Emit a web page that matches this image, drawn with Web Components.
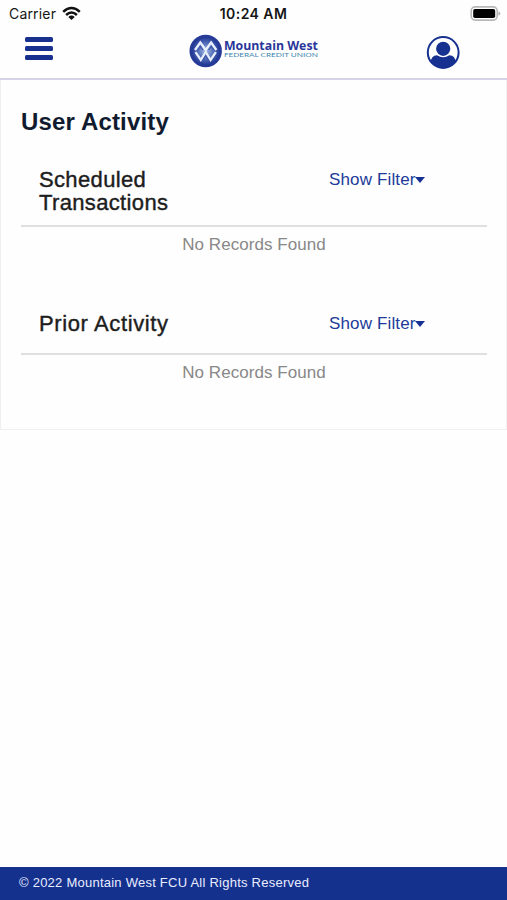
<!DOCTYPE html>
<html lang="en">
<head>
<meta charset="utf-8">
<title>User Activity</title>
<style>
body{margin:0;background:#fefefe;font-family:"Liberation Sans",Arial,sans-serif}
</style>
</head>
<body>
<activity-app></activity-app>
<script>
const define = (name, html) => customElements.define(name, class extends HTMLElement {
  constructor() {
    super();
    this.attachShadow({ mode: 'open' }).innerHTML = html;
  }
});

define('status-bar', `
<style>
:host{display:grid;grid-template-columns:1fr auto 1fr;align-items:center;height:27px;box-sizing:border-box;padding:0 6px 0 9px;font-family:Inter,sans-serif;color:#151515}
.left{display:flex;align-items:center;gap:5.5px;font-size:14px;letter-spacing:.18px}
.time{font-size:14px;font-weight:600;letter-spacing:.45px;margin-right:3px}
.battery{justify-self:end;display:block}
svg{display:block}
</style>
<div class="left"><span>Carrier</span>
<svg width="19" height="15" viewBox="0 0 19 15" fill="none" stroke="#111" stroke-width="2.5"><path d="M1.2 5.8Q9.5-1.8 17.8 5.8M4.1 9Q9.5 3.9 14.9 9"/><path d="M6.3 10.9Q9.5 8 12.7 10.9L9.5 14Z" fill="#111" stroke="none"/></svg></div>
<span class="time">10:24 AM</span>
<svg class="battery" width="31" height="15" viewBox="0 0 31 15"><rect x="1.2" y=".9" width="26" height="13.2" rx="4" fill="#fff" stroke="#b8b8b8" stroke-width="1.6"/><rect x="3.2" y="3" width="22" height="9" rx="1.8" fill="#000"/><path d="M28.5 5.2Q32 7.5 28.5 9.8Z" fill="#aaa"/></svg>
`);

define('brand-logo', `
<style>:host{display:block}svg{display:block}</style>
<svg width="130" height="34" viewBox="0 0 130 34">
<defs><radialGradient id="g"><stop offset="0" stop-color="#a9bde5"/><stop offset=".5" stop-color="#5a76bd"/><stop offset="1" stop-color="#223795"/></radialGradient></defs>
<circle cx="16.7" cy="17" r="16.2" fill="#263b98"/><circle cx="16.7" cy="17" r="14" fill="url(#g)"/>
<g fill="none" stroke="#e8f0fc" stroke-width="2.3"><path d="M6 16L11.3 8.5L16.7 16L22.1 8.5L27.4 16"/><path d="M6.5 18.2L11.8 26L16.7 18.2L21.6 26L26.9 18.2"/></g>
<path d="M8.8 16L11.3 12.3L13.8 16M19.6 16L22.1 12.3L24.6 16M14 26L16.7 21.5L19.4 26" fill="none" stroke="#3f58aa" stroke-width="1.2"/>
<text x="34.9" y="16.2" textLength="94" lengthAdjust="spacingAndGlyphs" font-family="Open Sans,sans-serif" font-weight="700" font-size="12.6" fill="#29369a">Mountain West</text>
<text x="34.9" y="22.6" textLength="94" lengthAdjust="spacingAndGlyphs" font-family="Lato,sans-serif" font-size="5.4" fill="#3f87b0">FEDERAL CREDIT UNION</text>
</svg>
`);

define('nav-bar', `
<style>
:host{display:grid;grid-template-columns:163.5px auto 1fr;height:53px;box-sizing:border-box;border-bottom:2px solid #d5d3e7;padding:0 46px 0 25px}
.menu{display:flex;flex-direction:column;gap:4.2px;margin-top:9.8px}
.menu i{display:block;width:28px;height:5px;border-radius:1.5px;background:#18318e}
brand-logo{margin-top:7px}
.user{justify-self:end;margin-top:8px}
</style>
<div class="menu"><i></i><i></i><i></i></div>
<brand-logo></brand-logo>
<svg class="user" width="35" height="35" viewBox="0 0 35 35"><defs><clipPath id="c"><circle cx="17.2" cy="17.5" r="15.5"/></clipPath></defs><circle cx="17.2" cy="17.5" r="15.4" fill="#fff" stroke="#16318f" stroke-width="2"/><g clip-path="url(#c)" fill="#16318f"><circle cx="17.2" cy="13.8" r="7.1"/><path d="M4.5 28Q5 20.5 11 20.2Q17.2 24.5 23.4 20.2Q29.4 20.5 30 28V34H4Z"/></g></svg>
`);

define('filter-link', `
<style>
:host{display:flex;align-items:center;font-size:17px;line-height:20px;color:#203b99}
span{letter-spacing:.14px}
i{width:0;height:0;border:5px solid transparent;border-top:6px solid #173193;border-bottom:0;margin-left:-1px}
</style><span>Show Filter</span><i></i>
`);

define('activity-section', `
<style>
:host{display:block}
.head{display:grid;grid-template-columns:290px 1fr;align-items:start;box-sizing:border-box;height:var(--head,60px);padding-left:18px}
h2{margin:0;width:150px;font-weight:400;font-size:22px;line-height:23px;letter-spacing:var(--track,.35px);color:#1d1d1d;-webkit-text-stroke:.4px #1d1d1d}
filter-link{margin-top:2px}
.empty{border-top:2px solid #dfdfdf;padding-top:8px;text-align:center;font-size:17px;letter-spacing:.05px;line-height:20px;color:#888}
</style>
<div class="head"><h2><slot></slot></h2><filter-link></filter-link></div>
<div class="empty">No Records Found</div>
`);

define('activity-card', `
<style>
:host{display:block;box-sizing:border-box;height:350px;border:1px solid #f0f0f0;border-top:0;padding:28px 19px 0 20px}
h1{margin:0;font-size:24px;line-height:28px;letter-spacing:.16px;color:#111b2f}
activity-section{margin-top:32px;--head:56.5px}
activity-section+activity-section{margin-top:57px;--head:41px;--track:.62px}
</style>
<h1>User Activity</h1>
<activity-section>Scheduled Transactions</activity-section>
<activity-section>Prior Activity</activity-section>
`);

define('page-footer', `
<style>
:host{display:flex;align-items:center;box-sizing:border-box;height:33px;padding:0 19px 3px;background:#15318e;color:#e9edff;font-size:13px;letter-spacing:.24px}
</style><slot></slot>
`);

define('activity-app', `
<style>
:host{display:flex;flex-direction:column;width:507px;height:900px;overflow:hidden}
page-footer{margin-top:auto}
</style>
<status-bar></status-bar><nav-bar></nav-bar><activity-card></activity-card>
<page-footer>© 2022 Mountain West FCU All Rights Reserved</page-footer>
`);
</script>
</body>
</html>
